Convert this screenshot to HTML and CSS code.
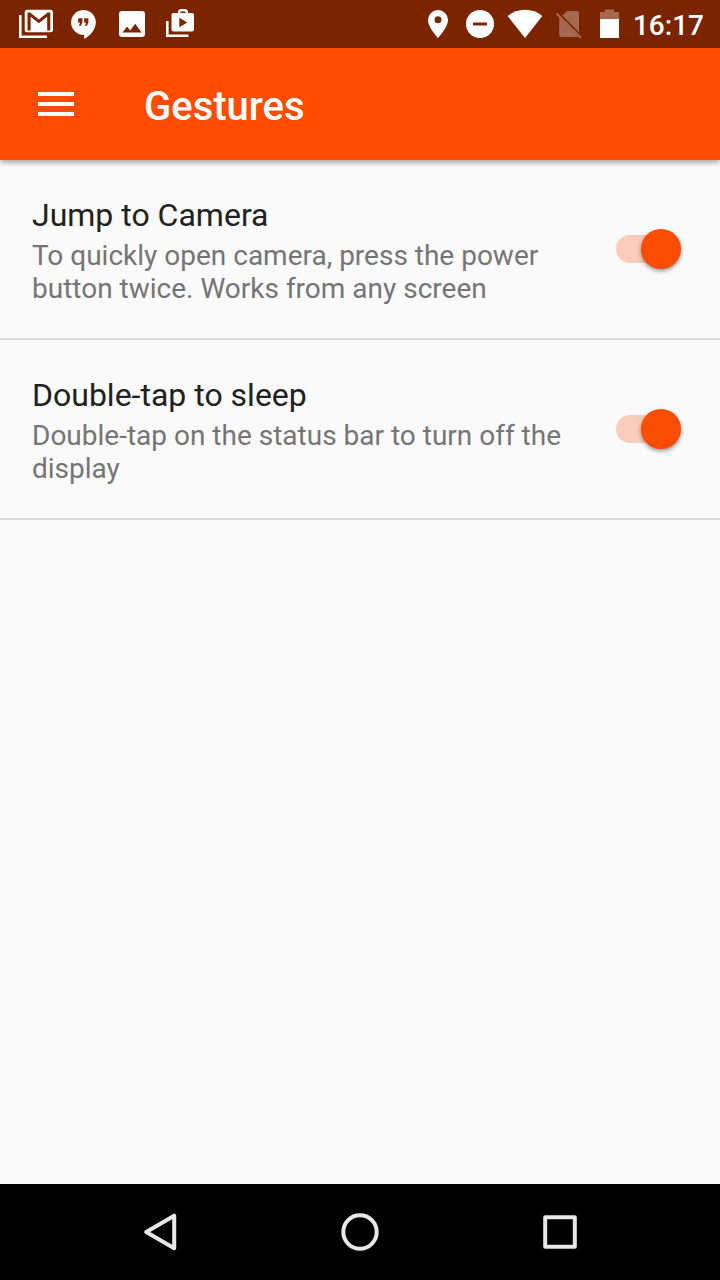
FILE: index.html
```html
<!DOCTYPE html>
<html lang="en">
<head>
<meta charset="utf-8">
<meta name="viewport" content="width=device-width, initial-scale=1">
<title>Gestures</title>
<link rel="stylesheet" href="styles.css">
</head>
<body>
<div class="screen">
  <div class="status-bar">
    <div class="notifications">
      <svg class="slot" viewBox="12 0 48 48" aria-hidden="true">
        <path d="M20.300 15v21.700H47" fill="none" stroke="#fff" stroke-width="2.600"/>
        <rect x="24.700" y="9.700" width="28.300" height="22.600" rx="2.500" fill="#fff"/>
        <path d="M27.500 30.500V12.500h2.600l8.800 7 8.800-7h2.600v18h-3.100V16.800l-8.300 6.400-8.300-6.400v13.700z" fill="#7a2500"/>
      </svg>
      <svg class="slot" viewBox="60 0 48 48" aria-hidden="true">
        <path d="M83.500 10a12.300 12.300 0 0 1 12.300 12.300c0 7-5 13-11.600 16.700v-4.200h-.7a12.400 12.400 0 0 1 0-24.800z" fill="#fff"/>
        <path d="M78.200 18.200h4.200v4.500l-1.500 3h-2l1.300-3h-2zM84.200 18.200h4.200v4.500l-1.500 3h-2l1.300-3h-2z" fill="#7a2500"/>
      </svg>
      <svg class="slot" viewBox="108 0 48 48" aria-hidden="true">
        <rect x="119" y="11" width="26" height="26" rx="3" fill="#fff"/>
        <path d="M122.500 32.500l4.500-6 3.200 4 5-6.800 6.300 8.800z" fill="#7a2500"/>
      </svg>
      <svg class="slot" viewBox="156 0 48 48" aria-hidden="true">
        <path d="M167.300 21v14.700H188.500" fill="none" stroke="#fff" stroke-width="2.600"/>
        <path d="M179.200 14v-2.500l1.300-1.300h5l1.300 1.300V14" fill="none" stroke="#fff" stroke-width="2.400"/>
        <rect x="171.500" y="13" width="22.500" height="18.500" rx="2" fill="#fff"/>
        <path d="M179.300 17.800v9.400l8-4.700z" fill="#7a2500"/>
      </svg>
    </div>
    <div class="system">
      <svg class="slot-sm" viewBox="417 0 42 48" aria-hidden="true">
        <path fill="#fff" fill-rule="evenodd" d="M438 10a10 10 0 0 0-10 10c0 7.500 10 18 10 18s10-10.500 10-18a10 10 0 0 0-10-10zm0 6.200a3.500 3.500 0 1 1 0 7 3.500 3.500 0 0 1 0-7z"/>
      </svg>
      <svg class="slot-sm" viewBox="459 0 42 48" aria-hidden="true">
        <circle cx="480" cy="24" r="14" fill="#fff"/>
        <path d="M473 22.500h14v3h-14z" fill="#7a2500"/>
      </svg>
      <svg class="slot" viewBox="501 0 48 48" aria-hidden="true">
        <path d="M507.700 16a27 27 0 0 1 34.600 0L525 38z" fill="#fff"/>
      </svg>
      <svg class="slot-xs" viewBox="549 0 40 48" aria-hidden="true">
        <path d="M567 11h10a2 2 0 0 1 2 2v19.200L562.300 15.600zM559.200 17.500l18.800 19-1 .5h-15.800a2 2 0 0 1-2-2z" fill="#a56851"/>
        <path d="M556.500 13.500l24.500 24.500" stroke="#a56851" stroke-width="2.200"/>
      </svg>
      <svg class="slot-xs" viewBox="589 0 40 48" aria-hidden="true">
        <path d="M605 9.500h9V12h5v7h-19v-7h5z" fill="#a56851"/>
        <path d="M600 19h19v19h-19z" fill="#fff"/>
      </svg>
      <time class="clock">16:17</time>
    </div>
  </div>

  <header class="app-bar">
    <button class="menu-button" type="button" aria-label="Open menu">
      <svg class="menu-icon" viewBox="0 0 36 24" aria-hidden="true"><path d="M0 0h36v4H0zM0 10h36v4H0zM0 20h36v4H0z" fill="#fff"/></svg>
    </button>
    <h1 class="title">Gestures</h1>
  </header>

  <main class="settings">
    <label class="setting" for="camera">
      <span class="setting-text">
        <span class="setting-name">Jump to Camera</span>
        <span class="setting-summary">To quickly open camera, press the power button twice. Works from any screen</span>
      </span>
      <input class="switch" id="camera" type="checkbox" role="switch" checked>
    </label>
    <label class="setting" for="sleep">
      <span class="setting-text">
        <span class="setting-name">Double-tap to sleep</span>
        <span class="setting-summary">Double-tap on the status bar to turn off the display</span>
      </span>
      <input class="switch" id="sleep" type="checkbox" role="switch" checked>
    </label>
  </main>

  <nav class="nav-bar" aria-label="System">
    <button class="nav-button" type="button" aria-label="Back">
      <svg class="nav-icon" viewBox="0 0 48 48" aria-hidden="true"><path d="M38.200 7.700v32.600L10.200 24z" fill="none" stroke="#e8e8e8" stroke-width="4" stroke-linejoin="round"/></svg>
    </button>
    <button class="nav-button" type="button" aria-label="Home">
      <svg class="nav-icon" viewBox="0 0 48 48" aria-hidden="true"><circle cx="24" cy="24" r="16.700" fill="none" stroke="#e8e8e8" stroke-width="4"/></svg>
    </button>
    <button class="nav-button" type="button" aria-label="Recent apps">
      <svg class="nav-icon" viewBox="0 0 48 48" aria-hidden="true"><rect x="9.200" y="9.200" width="29.600" height="29.600" fill="none" stroke="#e8e8e8" stroke-width="4" stroke-linejoin="round"/></svg>
    </button>
  </nav>
</div>
</body>
</html>
```

FILE: styles.css
```css
* {
  box-sizing: border-box;
}

body {
  margin: 0;
  background: #fafafa;
  font-family: Roboto, "Noto Sans", sans-serif;
  color: #212121;
}

button {
  padding: 0;
  border: 0;
  background: none;
  cursor: pointer;
}

svg {
  display: block;
}

.screen {
  display: flex;
  flex-direction: column;
  min-height: 100vh;
}

.status-bar {
  position: relative;
  z-index: 1;
  display: flex;
  justify-content: space-between;
  padding: 0 16px 0 12px;
  background: #7a2500;
}

.notifications,
.system {
  display: flex;
  align-items: center;
}

.slot {
  width: 48px;
  height: 48px;
}

.slot-sm {
  width: 42px;
  height: 48px;
}

.slot-xs {
  width: 40px;
  height: 48px;
}

.clock {
  padding: 4px 0 0 4px;
  color: #fff;
  font-size: 28px;
  font-weight: 500;
  line-height: 44px;
}

.app-bar {
  position: relative;
  display: flex;
  align-items: center;
  height: 112px;
  background: #ff4c00;
  box-shadow: 0 2px 6px rgba(0, 0, 0, 0.4);
}

.menu-button {
  display: flex;
  align-items: center;
  justify-content: center;
  width: 112px;
  height: 112px;
}

.menu-icon {
  width: 36px;
  height: 24px;
}

.title {
  margin: 0;
  padding: 6px 0 0 32px;
  color: #fff;
  font-size: 40px;
  font-weight: 500;
  line-height: 48px;
}

.settings {
  flex: 1;
}

.setting {
  display: flex;
  align-items: center;
  gap: 24px;
  padding: 0 38px 0 32px;
  border-bottom: 2px solid #dadada;
  cursor: pointer;
}

.setting-text {
  display: flex;
  flex: 1;
  flex-direction: column;
  gap: 4px;
  padding: 35px 0 33px;
}

.setting-name {
  font-size: 32px;
  line-height: 40px;
}

.setting-summary {
  color: #757575;
  font-size: 28px;
  line-height: 33px;
}

.switch {
  display: flex;
  flex: none;
  align-items: center;
  width: 66px;
  height: 40px;
  margin: 0;
  appearance: none;
  cursor: pointer;
}

.switch::before {
  width: 56px;
  height: 28px;
  border-radius: 14px;
  background: #bdbdbd;
  content: "";
}

.switch::after {
  flex: none;
  width: 40px;
  height: 40px;
  margin-left: -56px;
  border-radius: 50%;
  background: #f1f1f1;
  box-shadow: 0 2px 4px rgba(0, 0, 0, 0.4);
  content: "";
}

.switch:checked::before {
  background: #fbccb9;
}

.switch:checked::after {
  margin-left: -31px;
  background: #fa4c02;
}

.nav-bar {
  display: flex;
  justify-content: center;
  height: 96px;
  background: #000;
}

.nav-button {
  display: flex;
  align-items: center;
  justify-content: center;
  width: 200px;
  height: 96px;
}

.nav-icon {
  width: 48px;
  height: 48px;
}
```
